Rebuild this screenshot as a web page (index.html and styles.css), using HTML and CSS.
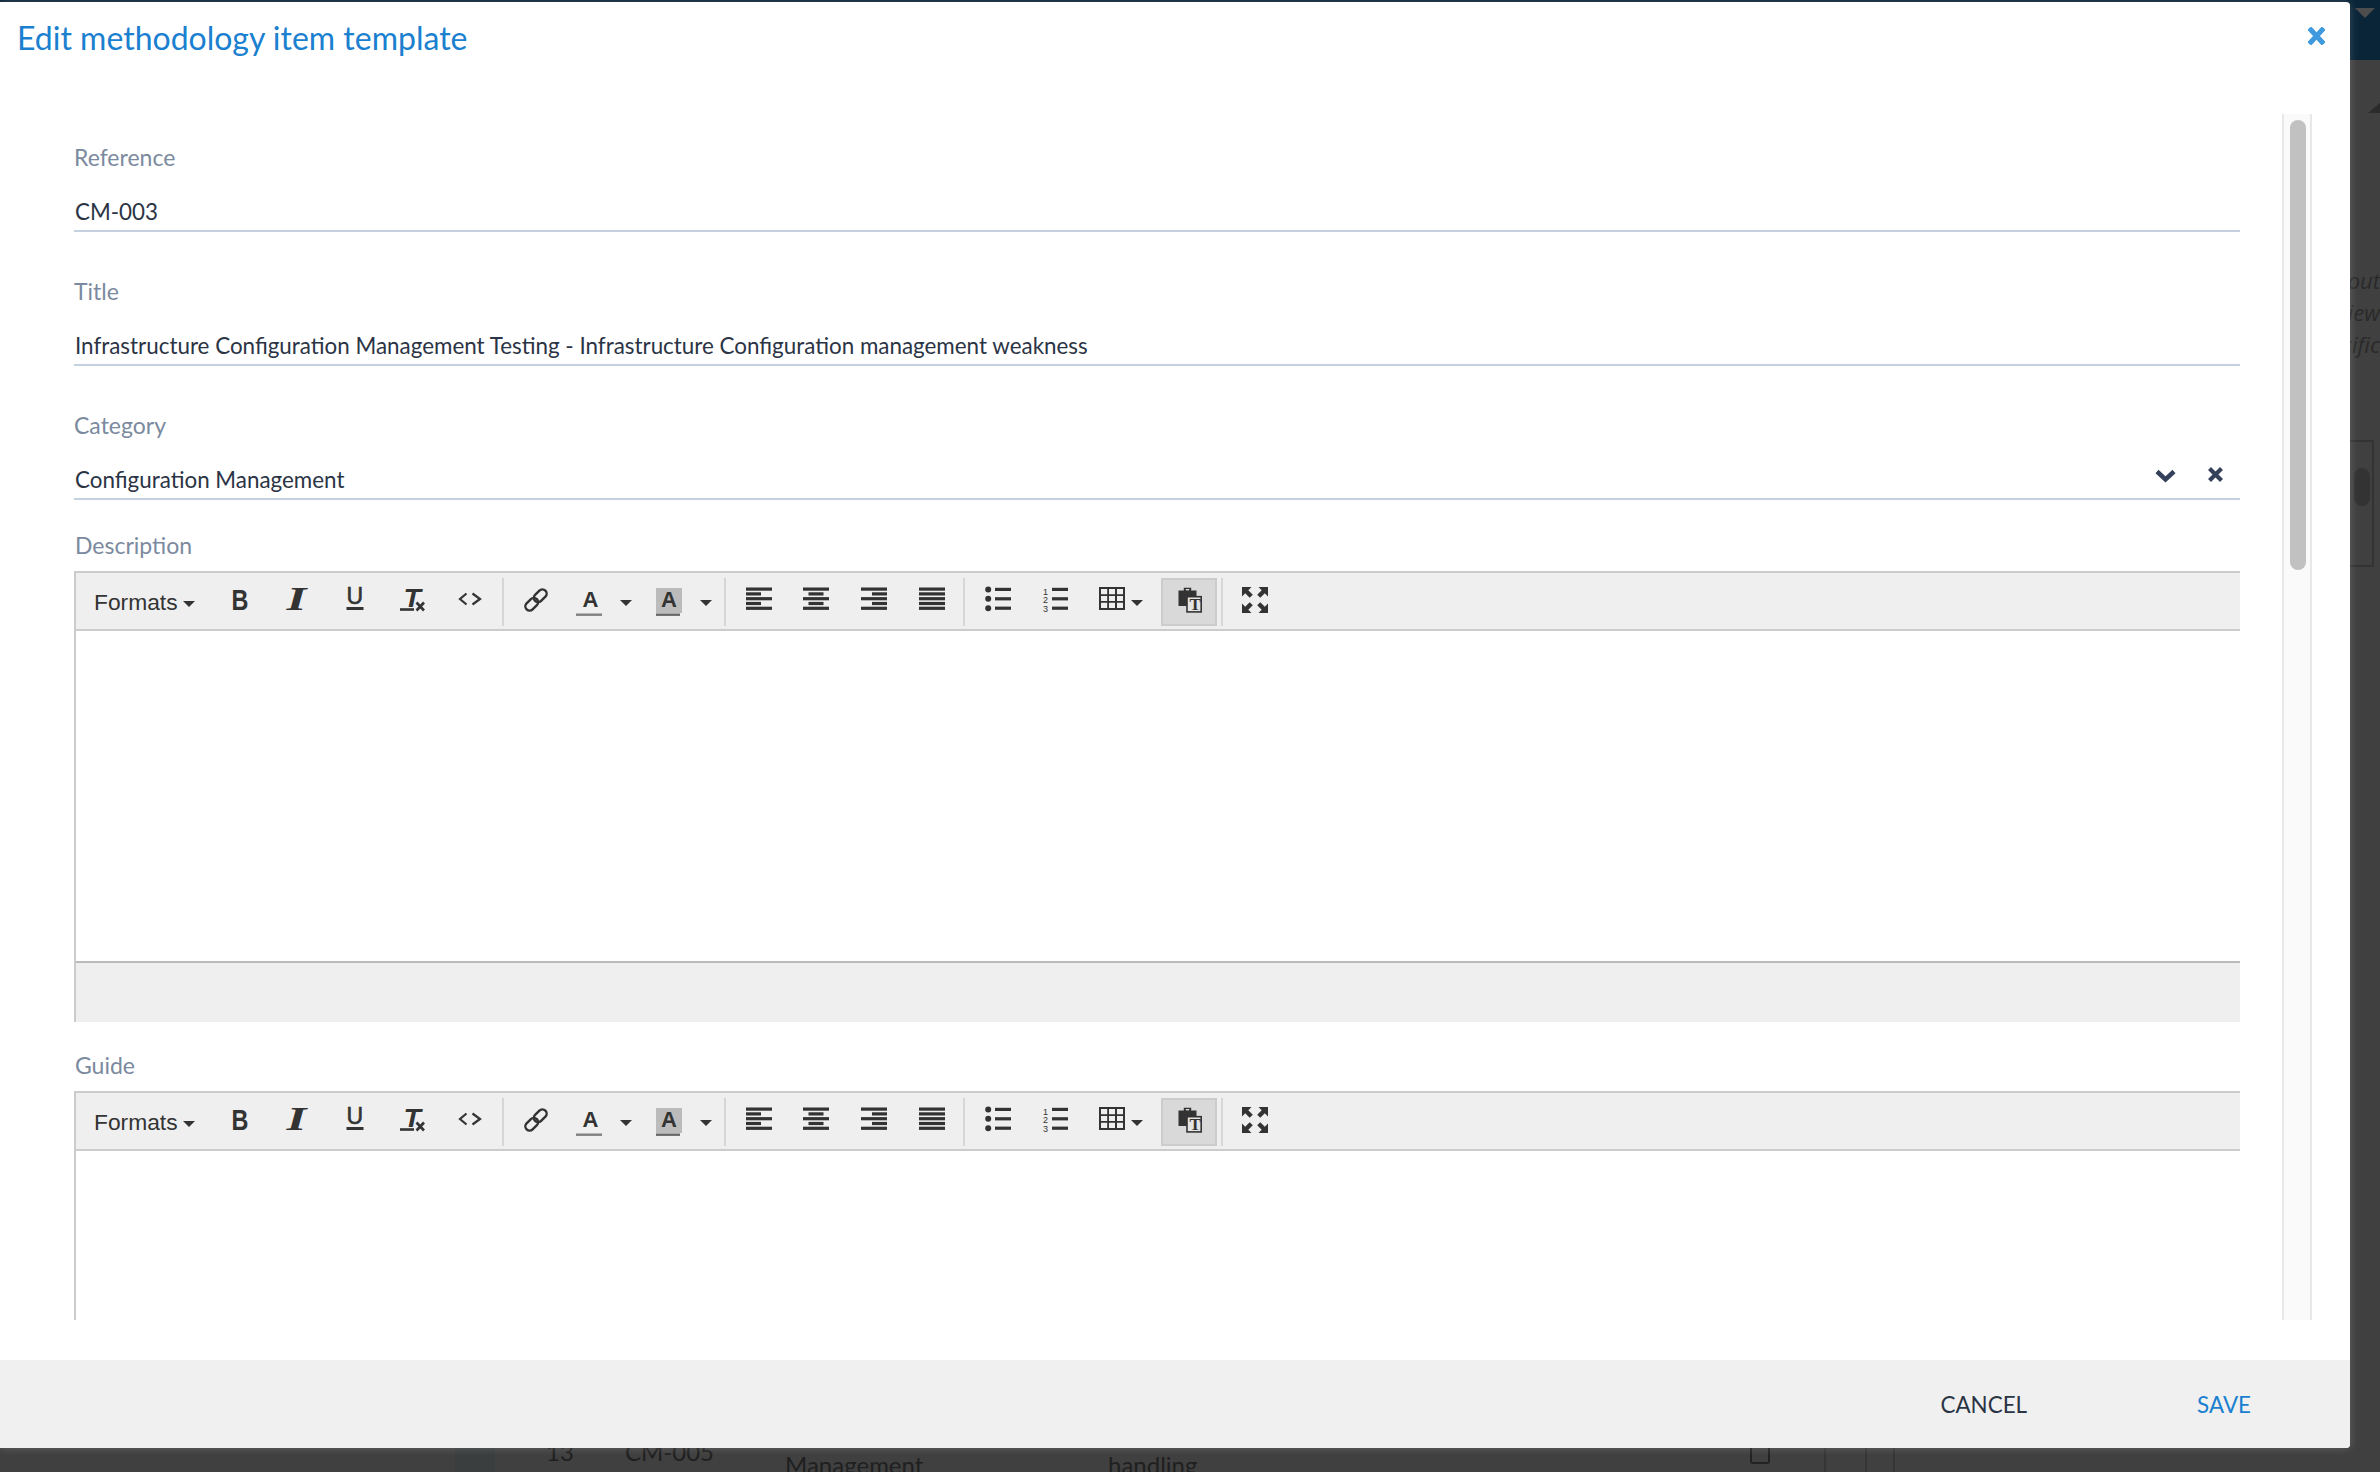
FILE: index.html
```html
<!DOCTYPE html>
<html lang="en">
<head>
<meta charset="utf-8">
<title>Edit methodology item template</title>
<link rel="stylesheet" href="styles.css">
</head>
<body>
<svg class="defs" width="0" height="0" aria-hidden="true">
  <symbol id="i-code" viewBox="0 0 26 26"><path class="ln thin" d="M9.5 6.5L3 12l6.5 5.5M15.500 6.500L23 12l-7.500 5.500"/></symbol>
  <symbol id="i-link" viewBox="0 0 26 26"><rect class="ol" x="1.500" y="13" width="14.500" height="8.500" rx="4.200" transform="rotate(-45 8.750 17.250)"/><rect class="ol" x="10" y="4.500" width="14.500" height="8.500" rx="4.200" transform="rotate(-45 17.250 8.750)"/></symbol>
  <symbol id="i-al" viewBox="0 0 26 26"><rect y=".5" width="26" height="3.200"/><rect y="5.300" width="15" height="3.200"/><rect y="10.100" width="26" height="3.200"/><rect y="14.900" width="15" height="3.200"/><rect y="19.700" width="26" height="3.200"/></symbol>
  <symbol id="i-ac" viewBox="0 0 26 26"><rect y=".5" width="26" height="3.200"/><rect x="5.500" y="5.300" width="15" height="3.200"/><rect y="10.100" width="26" height="3.200"/><rect x="5.500" y="14.900" width="15" height="3.200"/><rect y="19.700" width="26" height="3.200"/></symbol>
  <symbol id="i-ar" viewBox="0 0 26 26"><rect y=".5" width="26" height="3.200"/><rect x="11" y="5.300" width="15" height="3.200"/><rect y="10.100" width="26" height="3.200"/><rect x="11" y="14.900" width="15" height="3.200"/><rect y="19.700" width="26" height="3.200"/></symbol>
  <symbol id="i-aj" viewBox="0 0 26 26"><rect y=".5" width="26" height="3.200"/><rect y="5.300" width="26" height="3.200"/><rect y="10.100" width="26" height="3.200"/><rect y="14.900" width="26" height="3.200"/><rect y="19.700" width="26" height="3.200"/></symbol>
  <symbol id="i-ul" viewBox="0 0 26 26"><circle cx="3.200" cy="2.400" r="3"/><circle cx="3.200" cy="11.800" r="3"/><circle cx="3.200" cy="21.200" r="3"/><rect x="10" y=".8" width="16" height="3.200"/><rect x="10" y="10.200" width="16" height="3.200"/><rect x="10" y="19.600" width="16" height="3.200"/></symbol>
  <symbol id="i-table" viewBox="0 0 26 26"><path d="M0 0h26v23H0z M2 2v5.300h6.200V2z M10 2v5.300h6V2z M18 2v5.300h6V2z M2 9v5h6.200V9z M10 9v5h6V9z M18 9v5h6V9z M2 15.800V21h6.200v-5.200z M10 15.800V21h6v-5.200z M18 15.800V21h6v-5.200z" fill-rule="evenodd"/></symbol>
  <symbol id="i-full" viewBox="0 0 26 26"><path d="M0 0h9.500L6.300 3.200l4.500 4.500-3.100 3.100-4.500-4.500L0 9.500zM26 0h-9.500l3.200 3.200-4.500 4.500 3.100 3.100 4.500-4.500L26 9.500zM0 26h9.500l-3.200-3.200 4.500-4.500-3.100-3.100-4.500 4.500L0 16.500zM26 26h-9.500l3.200-3.200-4.500-4.500 3.100-3.100 4.500 4.500 3.200-3.200z"/></symbol>
</svg>

<div class="backdrop">
  <div class="strip"></div>
  <div class="nav-corner"><span class="tri-down"></span></div>
  <span class="tri-up"></span>
  <div class="side-text"><span>about</span><span>review</span><span>specific</span></div>
  <div class="side-box"><span class="side-thumb"></span></div>
  <span class="col-shade"></span>
  <span class="v1"></span><span class="v2"></span><span class="v3"></span>
  <span class="cell c-num">13</span>
  <span class="cell c-ref">CM-005</span>
  <span class="cell c-cat">Configuration<br>Management</span>
  <span class="cell c-desc">handling</span>
  <span class="c-check"></span>
</div>

<main class="modal">
  <header class="modal-head">
    <h1>Edit methodology item template</h1>
    <svg class="close" width="17" height="18" viewBox="0 0 17 18"><path d="M3 3l11 12M14 3L3 15"/></svg>
  </header>

  <div class="modal-body">
    <form class="form">
      <div class="field">
        <label>Reference</label>
        <div class="input"><span class="val">CM-003</span></div>
      </div>
      <div class="field">
        <label>Title</label>
        <div class="input"><span class="val">Infrastructure Configuration Management Testing - Infrastructure Configuration management weakness</span></div>
      </div>
      <div class="field field-select">
        <label>Category</label>
        <div class="input">
          <span class="val">Configuration Management</span>
          <svg class="chev" width="21" height="14" viewBox="0 0 21 14"><path d="M2 2.500l8.500 8 8.500-8"/></svg>
          <svg class="clear" width="15" height="15" viewBox="0 0 15 15"><path d="M3 3l9 9M12 3l-9 9"/></svg>
        </div>
      </div>

      <label class="ed-label">Description</label>
      <section class="editor">
        <div class="toolbar">
          <div class="listbox"><span>Formats</span><i class="caret"></i></div>
          <div class="btn"><svg viewBox="0 0 26 26"><text class="g-b" transform="translate(4.600 23) scale(.78 1)">B</text></svg></div>
          <div class="btn"><svg viewBox="0 0 26 26"><text class="g-i" transform="translate(2.500 23) scale(1.550 1)">I</text></svg></div>
          <div class="btn"><svg viewBox="0 0 26 26"><text class="g-u" x="4.500" y="17.300">U</text><rect x="4.500" y="20" width="17" height="3"/></svg></div>
          <div class="btn"><svg viewBox="0 0 26 26"><text class="g-t" transform="translate(3.600 20) scale(1.050 .98)">T</text><rect x="0" y="21.200" width="14" height="2.600"/><path class="ln" d="M16.500 15.500l7.500 8M24 15.500l-7.500 8"/></svg></div>
          <div class="btn"><svg><use href="#i-code"/></svg></div>
          <i class="sep"></i>
          <div class="btn"><svg><use href="#i-link"/></svg></div>
          <div class="split s-color"><svg viewBox="0 0 26 26"><text class="g-a" x="6.500" y="20">A</text><rect class="rule" x="0" y="26.500" width="26" height="2.400"/></svg><i class="caret"></i></div>
          <div class="split s-back"><svg viewBox="0 0 26 26"><rect class="sw" x="0" y="1" width="26" height="25"/><text class="g-a" x="5" y="20">A</text><rect class="rule2" x="0" y="26.500" width="24" height="2.400"/></svg><i class="caret"></i></div>
          <i class="sep sep-tight"></i>
          <div class="btn"><svg><use href="#i-al"/></svg></div>
          <div class="btn"><svg><use href="#i-ac"/></svg></div>
          <div class="btn"><svg><use href="#i-ar"/></svg></div>
          <div class="btn"><svg><use href="#i-aj"/></svg></div>
          <i class="sep"></i>
          <div class="btn"><svg><use href="#i-ul"/></svg></div>
          <div class="btn"><svg viewBox="0 0 26 26"><text class="g-n" x="1" y="7.500">1</text><text class="g-n" x="1" y="16">2</text><text class="g-n" x="1" y="24.500">3</text><rect x="10" y=".8" width="16" height="3.200"/><rect x="10" y="10.200" width="16" height="3.200"/><rect x="10" y="19.600" width="16" height="3.200"/></svg></div>
          <div class="split s-table"><svg><use href="#i-table"/></svg><i class="caret"></i></div>
          <div class="btn active"><svg viewBox="0 0 26 26"><path d="M2.500 3.500h5.300V.8h7.400v2.700h5.300V19H2.500z"/><rect x="9.800" y="2" width="3.400" height="1.400" fill="#d9d9d9"/><rect class="doc" x="11" y="9.700" width="14.200" height="15.200"/><text class="g-s" x="13.500" y="22.500">T</text></svg></div>
          <i class="sep"></i>
          <div class="btn"><svg><use href="#i-full"/></svg></div>
        </div>
        <div class="edit-area"></div>
        <div class="status"></div>
      </section>

      <label class="ed-label">Guide</label>
      <section class="editor">
        <div class="toolbar">
          <div class="listbox"><span>Formats</span><i class="caret"></i></div>
          <div class="btn"><svg viewBox="0 0 26 26"><text class="g-b" transform="translate(4.600 23) scale(.78 1)">B</text></svg></div>
          <div class="btn"><svg viewBox="0 0 26 26"><text class="g-i" transform="translate(2.500 23) scale(1.550 1)">I</text></svg></div>
          <div class="btn"><svg viewBox="0 0 26 26"><text class="g-u" x="4.500" y="17.300">U</text><rect x="4.500" y="20" width="17" height="3"/></svg></div>
          <div class="btn"><svg viewBox="0 0 26 26"><text class="g-t" transform="translate(3.600 20) scale(1.050 .98)">T</text><rect x="0" y="21.200" width="14" height="2.600"/><path class="ln" d="M16.500 15.500l7.500 8M24 15.500l-7.500 8"/></svg></div>
          <div class="btn"><svg><use href="#i-code"/></svg></div>
          <i class="sep"></i>
          <div class="btn"><svg><use href="#i-link"/></svg></div>
          <div class="split s-color"><svg viewBox="0 0 26 26"><text class="g-a" x="6.500" y="20">A</text><rect class="rule" x="0" y="26.500" width="26" height="2.400"/></svg><i class="caret"></i></div>
          <div class="split s-back"><svg viewBox="0 0 26 26"><rect class="sw" x="0" y="1" width="26" height="25"/><text class="g-a" x="5" y="20">A</text><rect class="rule2" x="0" y="26.500" width="24" height="2.400"/></svg><i class="caret"></i></div>
          <i class="sep sep-tight"></i>
          <div class="btn"><svg><use href="#i-al"/></svg></div>
          <div class="btn"><svg><use href="#i-ac"/></svg></div>
          <div class="btn"><svg><use href="#i-ar"/></svg></div>
          <div class="btn"><svg><use href="#i-aj"/></svg></div>
          <i class="sep"></i>
          <div class="btn"><svg><use href="#i-ul"/></svg></div>
          <div class="btn"><svg viewBox="0 0 26 26"><text class="g-n" x="1" y="7.500">1</text><text class="g-n" x="1" y="16">2</text><text class="g-n" x="1" y="24.500">3</text><rect x="10" y=".8" width="16" height="3.200"/><rect x="10" y="10.200" width="16" height="3.200"/><rect x="10" y="19.600" width="16" height="3.200"/></svg></div>
          <div class="split s-table"><svg><use href="#i-table"/></svg><i class="caret"></i></div>
          <div class="btn active"><svg viewBox="0 0 26 26"><path d="M2.500 3.500h5.300V.8h7.400v2.700h5.300V19H2.500z"/><rect x="9.800" y="2" width="3.400" height="1.400" fill="#d9d9d9"/><rect class="doc" x="11" y="9.700" width="14.200" height="15.200"/><text class="g-s" x="13.500" y="22.500">T</text></svg></div>
          <i class="sep"></i>
          <div class="btn"><svg><use href="#i-full"/></svg></div>
        </div>
        <div class="edit-area"></div>
        <div class="status"></div>
      </section>
    </form>
    <div class="track"><span class="thumb"></span></div>
  </div>

  <footer class="modal-foot">
    <button class="act cancel" type="button">CANCEL</button>
    <button class="act save" type="button">SAVE</button>
  </footer>
</main>
</body>
</html>
```

FILE: styles.css
```css
* { box-sizing: border-box; }
html, body { margin: 0; height: 100%; }
body {
  position: relative;
  width: 2380px;
  height: 1472px;
  overflow: hidden;
  background: #404040;
  font-family: Lato, "Liberation Sans", sans-serif;
}
.defs { position: absolute; }

/* dimmed page behind the dialog */
.backdrop { position: absolute; inset: 0; overflow: hidden; color: #1f1f1f; }
.strip { position: absolute; left: 0; top: 0; width: 100%; height: 3px; background: #0a2538; }
.nav-corner { position: absolute; right: 0; top: 0; width: 30px; height: 60px; background: #0a2538; }
.tri-down { position: absolute; left: 5px; top: 8px; border: 10px solid transparent; border-top-color: #4d4d4d; border-bottom: 0; }
.tri-up { position: absolute; left: 2368px; top: 103px; border: 12px solid transparent; border-bottom: 10px solid #2b2b2b; border-top: 0; }
.side-text { position: absolute; right: 0; top: 264px; display: flex; flex-direction: column; align-items: flex-end; font: italic 22px/32px "Open Sans", sans-serif; color: #2a2a2a; }
.side-box { position: absolute; left: 2340px; top: 440px; width: 34px; height: 127px; border: 2px solid #333; }
.side-thumb { position: absolute; left: 12px; top: 26px; width: 16px; height: 38px; border-radius: 8px; background: #333; }
.col-shade { position: absolute; left: 455px; top: 1440px; width: 40px; height: 32px; background: #3b3e3e; }
.v1, .v2, .v3 { position: absolute; top: 1440px; width: 2px; height: 32px; background: #353535; }
.v1 { left: 1824px; } .v2 { left: 1865px; } .v3 { left: 1893px; }
.cell { position: absolute; font-size: 24px; line-height: 30px; color: #1f1f1f; }
.c-num { left: 546px; top: 1437px; }
.c-ref { left: 625px; top: 1437px; }
.c-cat { left: 785px; top: 1420px; }
.c-desc { left: 1108px; top: 1450px; }
.c-check { position: absolute; left: 1750px; top: 1444px; width: 20px; height: 20px; border: 2px solid #222; border-radius: 3px; }

/* dialog */
.modal {
  position: absolute;
  left: 0;
  top: 2px;
  width: 2350px;
  height: 1446px;
  display: flex;
  flex-direction: column;
  background: #fff;
  border-radius: 0 4px 4px 0;
  box-shadow: 0 0 9px rgba(255, 255, 255, .2);
}
.modal-head { flex: none; height: 112px; display: flex; justify-content: space-between; align-items: flex-start; padding: 25px 25px 0 18px; }
.modal-head h1 { margin: -11px 0 0 -1px; font-size: 32px; line-height: 44px; font-weight: 400; color: #1a80cf; }
.close path { stroke: #3f99de; stroke-width: 5; stroke-linecap: square; fill: none; }

.modal-body { flex: none; height: 1206px; display: flex; overflow: hidden; }
.form { width: 2240px; padding: 27px 0 0 74px; flex: none; }
.track { width: 30px; margin-left: 42px; height: 100%; flex: none; padding: 6px 6px 0 6px; background: #fafafa; border-left: 2px solid #e8e8e8; border-right: 2px solid #e8e8e8; }
.thumb { display: block; width: 16px; height: 450px; border-radius: 8px; background: #c1c1c1; }

.field { margin-bottom: 43px; }
.field-select { margin-bottom: 29px; }
label { display: block; height: 34px; font-size: 23px; line-height: 32px; color: #7b8a9e; }
.input { display: flex; align-items: center; height: 57px; padding: 20px 17px 1px 1px; border-bottom: 2px solid #c5d1e0; }
.val { flex: 1; margin-top: -1px; font-size: 22.4px; line-height: 34px; color: #2b3445; }
.chev { margin: -8px 32px 0 0; }
.chev path { fill: none; stroke: #35405a; stroke-width: 4.5; }
.clear { margin: -12px 0 0 0; }
.clear path { fill: none; stroke: #35405a; stroke-width: 4.2; stroke-linecap: square; }

.ed-label { margin: 0 0 8px; padding-left: 1px; }
.editor { border-left: 2px solid #ccc; margin-bottom: 27px; }
.toolbar { height: 60px; display: flex; align-items: flex-start; padding-top: 5px; background: #efefef; border-top: 2px solid #ccc; border-bottom: 2px solid #ccc; }
.edit-area { height: 330px; background: #fff; }
.status { height: 61px; background: #efefef; border-top: 2px solid #bbb; }

.listbox { width: 135px; height: 48px; flex: none; display: flex; align-items: center; padding: 1px 0 0 18px; font: 22.8px "Liberation Sans", sans-serif; color: #333; }
.listbox .caret { margin: 3px 0 0 5px; }
.caret { display: block; flex: none; border-style: solid; border-width: 6px 6.5px 0; border-color: #333 transparent transparent; }

.btn { width: 57.6px; height: 48px; flex: none; display: flex; align-items: center; justify-content: center; padding-bottom: 4px; }
.split { height: 48px; flex: none; display: flex; align-items: center; padding-bottom: 4px; }
.split .caret { margin-top: 6px; }
.s-color { width: 75.4px; padding-left: 11.4px; }
.s-color .caret { margin-left: 18px; }
.s-back { width: 84px; padding-left: 16px; }
.s-back .caret { margin-left: 18px; }
.s-table { width: 73.4px; padding-left: 15.4px; }
.s-table .caret { margin-left: 6px; }
.active { width: 56px; margin-left: 4px; background: #d9d9d9; border: 2px solid #ccc; }
.sep { display: block; flex: none; width: 2px; height: 48px; margin: 0 3.5px 0 3px; background: #d6d6d6; }
.sep-tight { margin: 0 3.5px 0 0; }
.active + .sep { margin-left: 4px; margin-right: 3px; }

.btn svg, .split svg { width: 26px; height: 26px; flex: none; overflow: visible; fill: #333; }
symbol { overflow: visible; }
.g-b { font: 700 30px "Liberation Sans", sans-serif; }
.g-i { font: italic 700 33px "Liberation Serif", serif; }
.g-u { font: 400 23px "Liberation Sans", sans-serif; stroke: #333; stroke-width: .6; }
.g-t { font: italic 700 27px "Liberation Sans", sans-serif; }
.g-a { font: 700 22px "Liberation Sans", sans-serif; }
.g-n { font: 400 9px "Liberation Sans", sans-serif; }
.g-s { font: 700 17px "Liberation Serif", serif; }
.ln { fill: none; stroke: #333; stroke-width: 2.6; }
.ln.thin { stroke-width: 2.2; }
.ol { fill: none; stroke: #333; stroke-width: 2.4; }
.rule { fill: #808080; }
.rule2 { fill: #666; }
.sw { fill: #bbb; }
.doc { fill: #e4e4e4; stroke: #333; stroke-width: 1.6; }

.modal-foot { flex: none; margin-top: auto; height: 88px; display: flex; justify-content: flex-end; align-items: center; gap: 170px; padding: 0 99px 0 0; background: #f0f0f0; border-radius: 0 0 4px 0; }
.act { border: 0; padding: 0; background: none; font: 22.4px Lato, sans-serif; }
.cancel { color: #2b3445; }
.save { color: #1a80cf; }
```
